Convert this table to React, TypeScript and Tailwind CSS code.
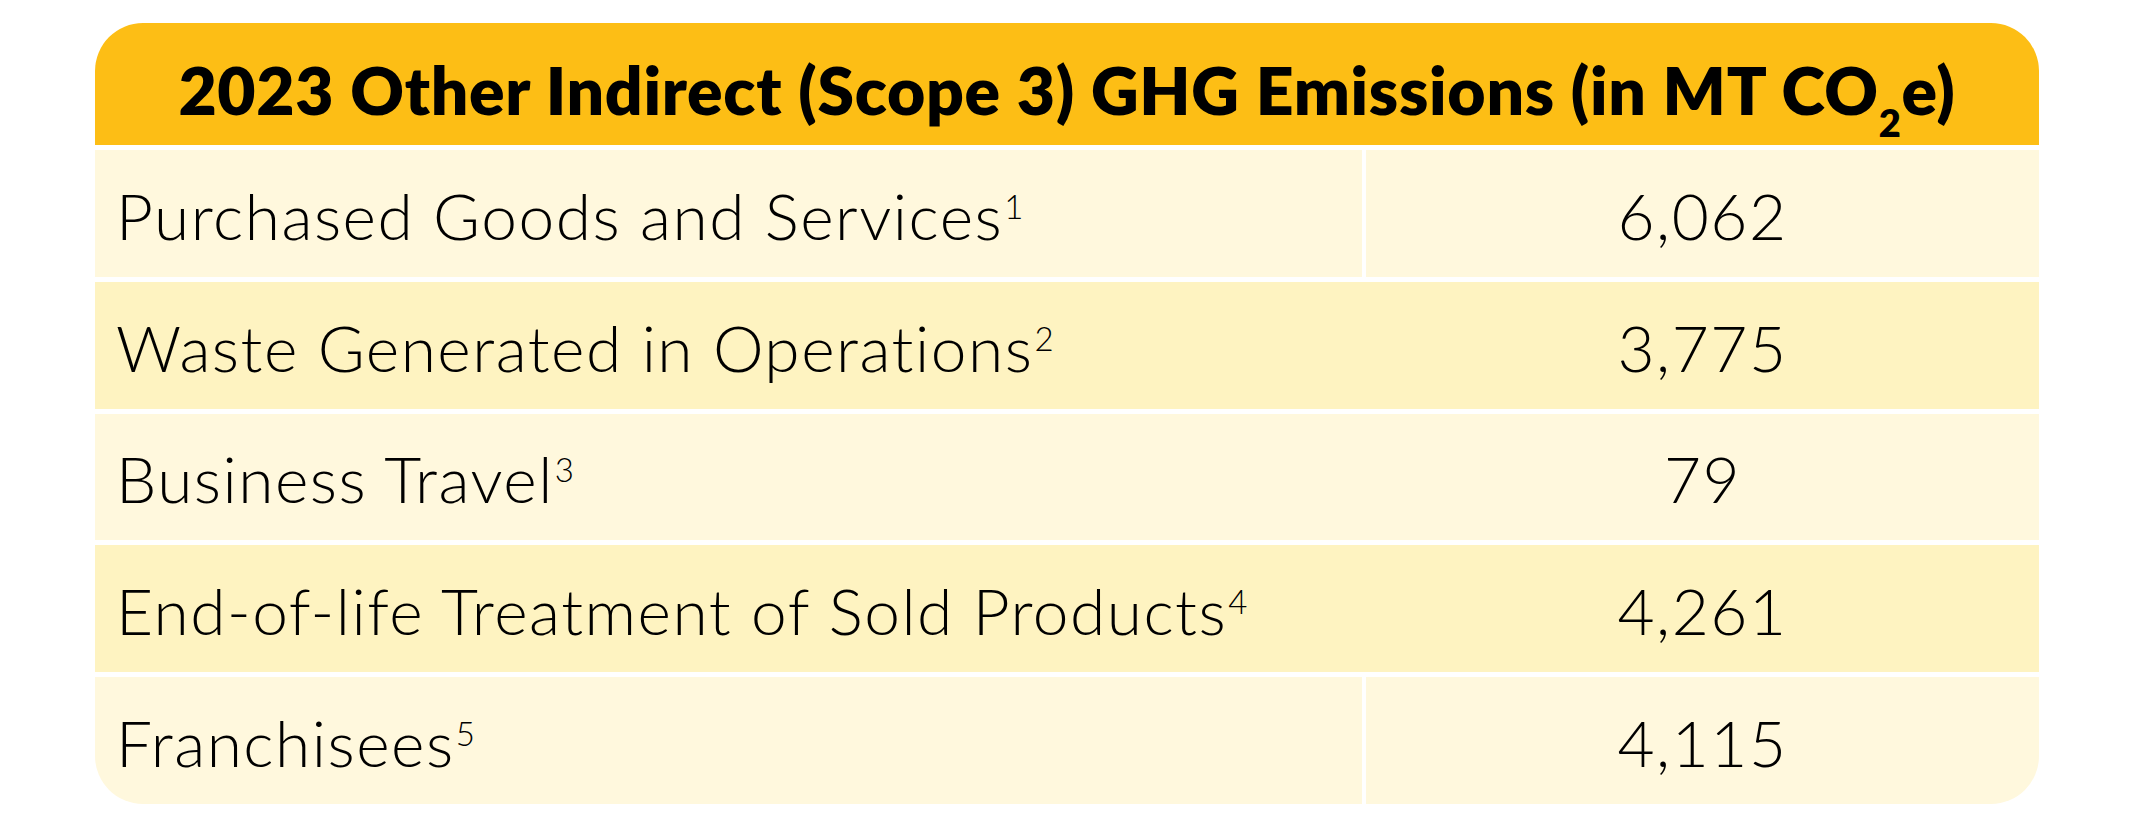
import React from "react";

type Row = { label: string; note: string; value: string; alt: boolean; split: boolean };

const rows: Row[] = [
  { label: "Purchased Goods and Services", note: "1", value: "6,062", alt: false, split: true },
  { label: "Waste Generated in Operations", note: "2", value: "3,775", alt: true, split: false },
  { label: "Business Travel", note: "3", value: "79", alt: false, split: false },
  { label: "End-of-life Treatment of Sold Products", note: "4", value: "4,261", alt: true, split: false },
  { label: "Franchisees", note: "5", value: "4,115", alt: false, split: true },
];

export default function App() {
  return (
    <div className="w-[2133px] h-[828px] bg-white pt-[23px] pl-[95px] font-['Lato','Liberation_Sans',sans-serif] text-black">
      <div className="w-[1944px] h-[781px] rounded-[48px] overflow-hidden flex flex-col gap-[5px] bg-white">
        <div className="h-[122px] shrink-0 bg-[#FDBE15] flex items-center justify-center pt-[12px]">
          <h1 className="text-[66px] font-extrabold leading-none whitespace-nowrap tracking-[0.7px]">
            2023 Other Indirect (Scope 3) GHG Emissions (in MT CO
            <sub className="text-[38px] relative top-[22px] leading-none align-baseline">2</sub>
            e)
          </h1>
        </div>
        {rows.map((r) => (
          <div
            key={r.label}
            className={`flex-1 flex ${r.alt ? "bg-[#FEF3C1]" : "bg-[#FFF8DD]"}`}
          >
            <div className="w-[1267px] shrink-0 flex items-center pl-[21px] pt-[5px]">
              <span className="text-[64px] font-light leading-none whitespace-nowrap tracking-[1.5px]">
                {r.label}
                <sup className="text-[33px] relative top-[-21px] leading-none align-baseline ml-[1px] tracking-normal">{r.note}</sup>
              </span>
            </div>
            <div className={`w-[4px] shrink-0 ${r.split ? "bg-white" : ""}`} />
            <div className="flex-1 flex items-center justify-center pt-[5px]">
              <span className="text-[64px] font-light leading-none tracking-[1.5px]">{r.value}</span>
            </div>
          </div>
        ))}
      </div>
    </div>
  );
}
